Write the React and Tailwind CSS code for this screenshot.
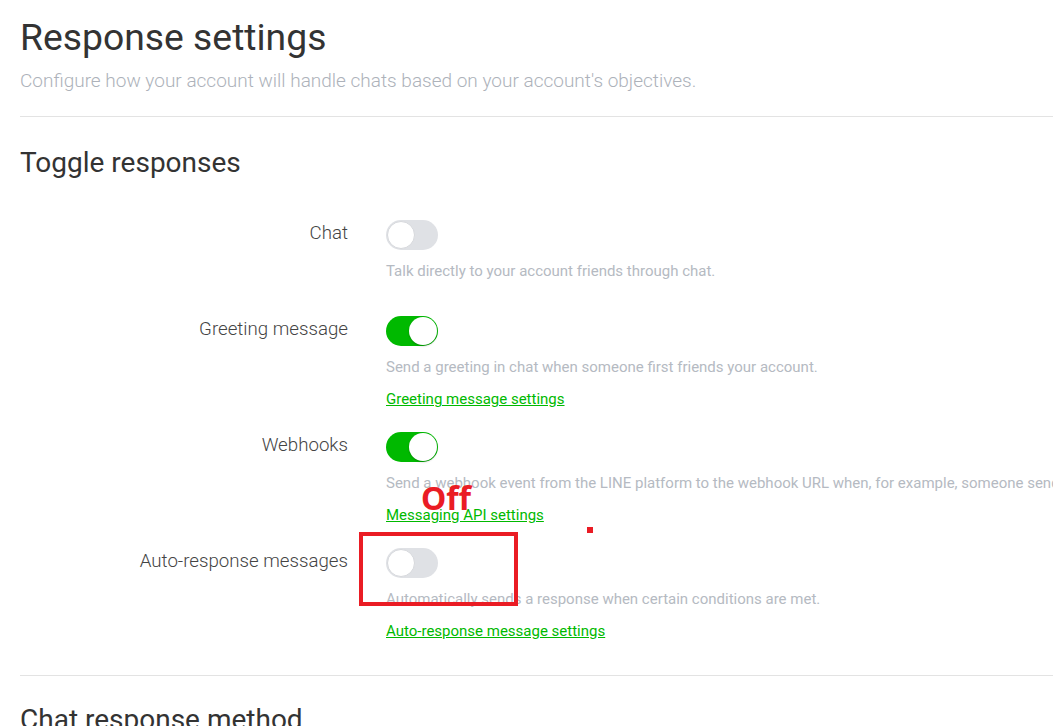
import React from "react";

function Toggle({ on }) {
  return (
    <div
      className={
        "relative h-[30px] w-[52px] rounded-full " +
        (on ? "bg-[#00b900]" : "bg-[#dfe1e5]")
      }
    >
      <div
        className={
          "absolute top-[1px] h-[28px] w-[28px] rounded-full bg-white " +
          (on
            ? "right-[1px] shadow-[0_1px_2px_rgba(0,0,0,0.25)]"
            : "left-[1px] border border-[#d6d8dc]")
        }
      />
    </div>
  );
}

function Row({ label, on, desc, link, mt }) {
  return (
    <div className={"flex " + mt}>
      <div className="w-[328px] shrink-0 pt-[1px] text-right text-[18.7px] font-light leading-[24px] text-[#444]">
        {label}
      </div>
      <div className="ml-[38px] flex flex-col">
        <Toggle on={on} />
        <div className="mt-[11px] whitespace-nowrap text-[15px] leading-[20px] text-[#b5bac2]">
          {desc}
        </div>
        {link && (
          <a className="mt-[12px] whitespace-nowrap text-[15px] leading-[20px] text-[#00b900] underline" href="#">
            {link}
          </a>
        )}
      </div>
    </div>
  );
}

export default function App() {
  return (
    <div
      className="relative h-[726px] w-[1053px] overflow-hidden bg-white"
      style={{ fontFamily: "Roboto, 'Liberation Sans', sans-serif" }}
    >
      <div className="w-[1200px] pl-[20px] pt-[14px]">
        <h1 className="text-[37.3px] font-normal leading-[46px] text-[#333]">Response settings</h1>
        <p className="mt-[9px] text-[19px] font-light leading-[24px] text-[#adb2ba]">
          Configure how your account will handle chats based on your account's objectives.
        </p>
        <div className="mt-[23px] h-px bg-[#e3e3e3]" />
        <h2 className="mt-[29px] text-[28px] font-normal leading-[34px] text-[#333]">Toggle responses</h2>

        <Row
          mt="mt-[40px]"
          label="Chat"
          on={false}
          desc="Talk directly to your account friends through chat."
        />
        <Row
          mt="mt-[35px]"
          label="Greeting message"
          on={true}
          desc="Send a greeting in chat when someone first friends your account."
          link="Greeting message settings"
        />
        <Row
          mt="mt-[23px]"
          label="Webhooks"
          on={true}
          desc="Send a webhook event from the LINE platform to the webhook URL when, for example, someone sends a message to your account."
          link="Messaging API settings"
        />
        <Row
          mt="mt-[23px]"
          label="Auto-response messages"
          on={false}
          desc="Automatically sends a response when certain conditions are met."
          link="Auto-response message settings"
        />

        <div className="mt-[34px] h-px bg-[#e3e3e3]" />
        <h2 className="mt-[27px] text-[28px] font-normal leading-[34px] text-[#333]">Chat response method</h2>
      </div>

      {/* annotations */}
      <div
        className="absolute left-[421px] top-[478px] text-[32px] font-bold leading-[40px] text-[#ea1c24]"
        style={{ fontFamily: "'Noto Sans', 'Open Sans', sans-serif" }}
      >
        Off
      </div>
      <div className="absolute left-[359px] top-[532px] h-[74px] w-[159px] border-[4px] border-[#ea1c24]" />
      <div className="absolute left-[587px] top-[527px] h-[6px] w-[6px] bg-[#ea1c24]" />
    </div>
  );
}
